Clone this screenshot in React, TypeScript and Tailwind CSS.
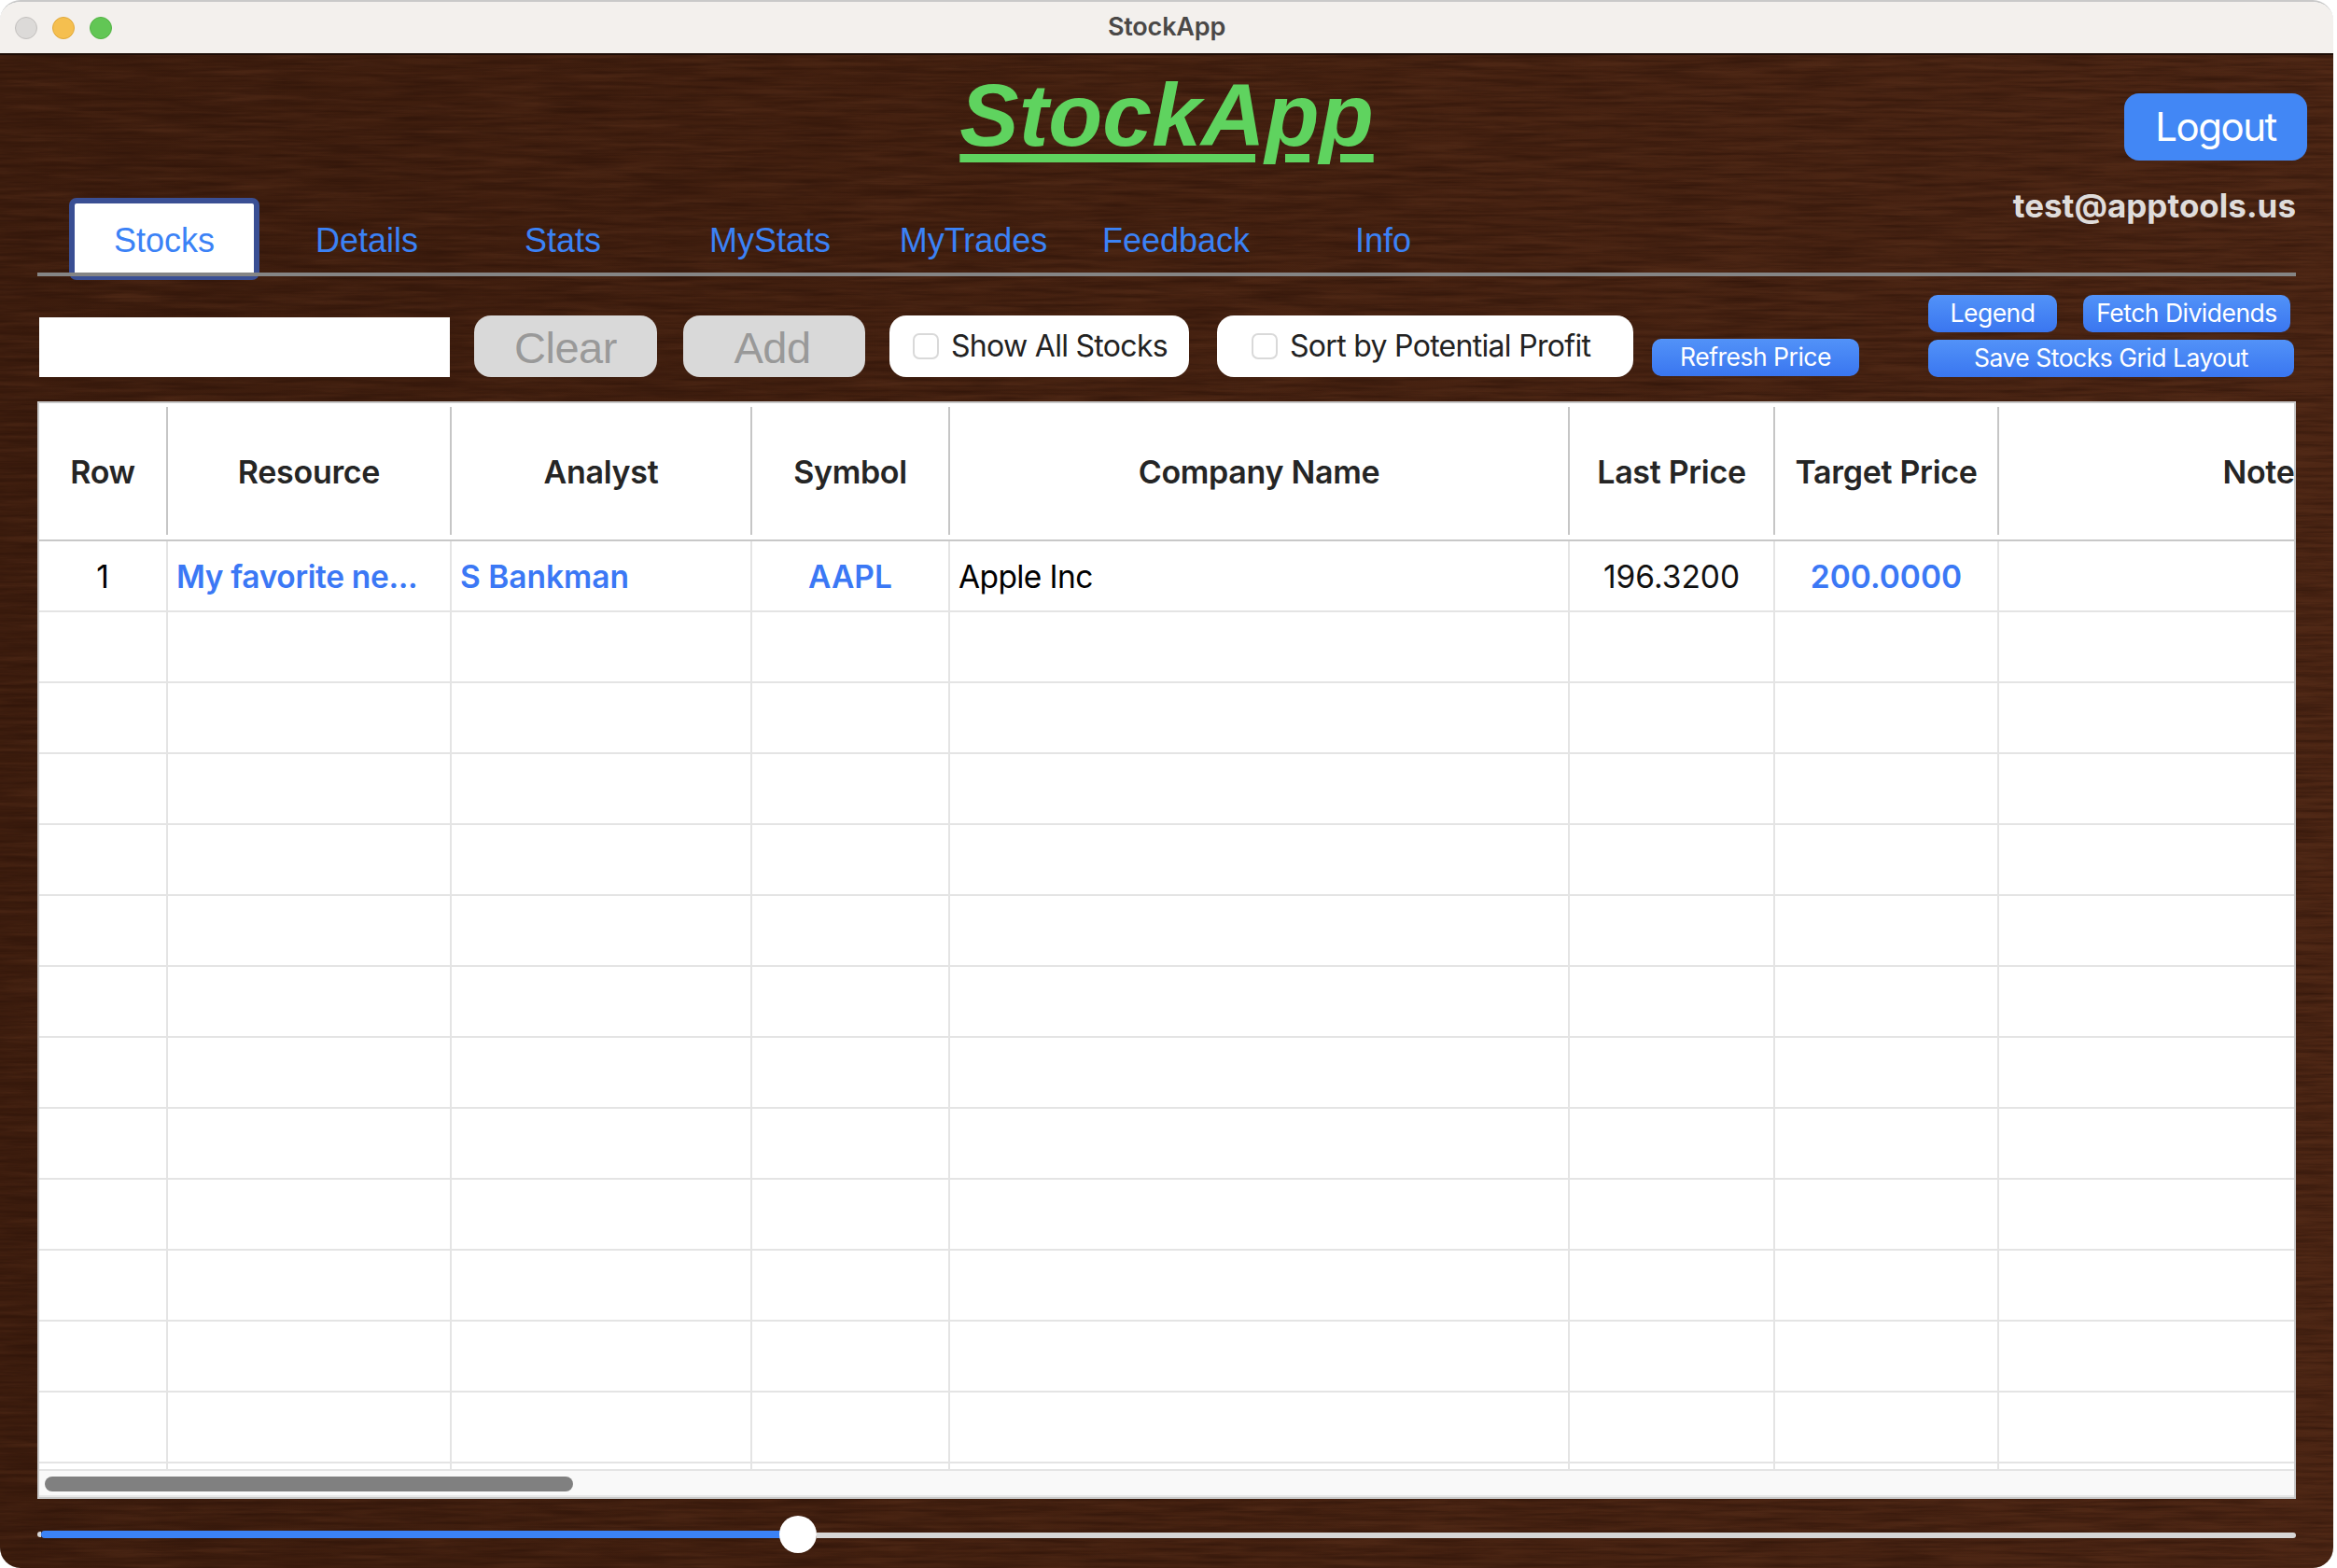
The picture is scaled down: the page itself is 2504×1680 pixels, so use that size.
const tabs = [
  { label: "Details", w: "w-[230px]" },
  { label: "Stats", w: "w-[190px]" },
  { label: "MyStats", w: "w-[254px]" },
  { label: "MyTrades", w: "w-[182px]" },
  { label: "Feedback", w: "w-[252px]" },
  { label: "Info", w: "w-[192px]" },
];

const columns = ["w-[138px]", "w-[304px]", "w-[322px]", "w-[212px]", "w-[664px]", "w-[220px]", "w-[240px]", "w-[556px]"];
const headers = ["Row", "Resource", "Analyst", "Symbol", "Company Name", "Last Price", "Target Price", "Note"];
const blue = "text-[#3b78f5] font-semibold";
const first = [
  { t: "1", c: "justify-center text-black" },
  { t: "My favorite ne...", c: `pl-[9px] tracking-[-0.35px] ${blue}` },
  { t: "S Bankman", c: `pl-[9px] ${blue}` },
  { t: "AAPL", c: `justify-center ${blue}` },
  { t: "Apple Inc", c: "pl-[9px] text-black tracking-[-0.6px]" },
  { t: "196.3200", c: "justify-center text-[#111]" },
  { t: "200.0000", c: `justify-center ${blue}` },
  { t: "", c: "" },
];

function Wood() {
  return (
    <svg className="absolute inset-0 h-full w-full" aria-hidden="true">
      <defs>
        <filter id="dark" x="0" y="0" width="100%" height="100%" colorInterpolationFilters="sRGB">
          <feTurbulence type="fractalNoise" baseFrequency="0.012 0.24" numOctaves="5" seed="8" />
          <feColorMatrix type="matrix" values="0 0 0 0 0.17  0 0 0 0 0.07  0 0 0 0 0.03  1.2 0 0 0 -0.42" />
        </filter>
        <filter id="light" x="0" y="0" width="100%" height="100%" colorInterpolationFilters="sRGB">
          <feTurbulence type="fractalNoise" baseFrequency="0.01 0.14" numOctaves="4" seed="21" />
          <feColorMatrix type="matrix" values="0 0 0 0 0.34  0 0 0 0 0.18  0 0 0 0 0.1  1.2 0 0 0 -0.5" />
        </filter>
        <linearGradient id="tone" x1="0" y1="0" x2="1" y2="0">
          <stop offset="0" stopColor="#3c1c0d" />
          <stop offset="0.5" stopColor="#452110" />
          <stop offset="0.8" stopColor="#482312" />
          <stop offset="1" stopColor="#4d2614" />
        </linearGradient>
      </defs>
      <rect width="100%" height="100%" fill="url(#tone)" />
      <rect width="100%" height="100%" filter="url(#light)" />
      <rect width="100%" height="100%" filter="url(#dark)" />
    </svg>
  );
}

function SmallButton({ children, className }: { children: string; className: string }) {
  return (
    <button className={`flex items-center justify-center rounded-[10px] bg-gradient-to-b from-[#5292f8] to-[#3a76f0] pb-[1px] text-[26.5px] tracking-[-0.5px] text-white ${className}`}>
      {children}
    </button>
  );
}

function Check({ label, className }: { label: string; className: string }) {
  return (
    <div className={`flex h-[66px] items-center rounded-[18px] bg-white text-[32px] tracking-[-0.7px] text-[#222] ${className}`}>
      <span className="h-[28px] w-[28px] shrink-0 rounded-[7px] border-2 border-[#d9d9d9] bg-white" />
      <span className="ml-[13px] whitespace-nowrap leading-none">{label}</span>
    </div>
  );
}

export default function App() {
  return (
    <div className="h-[1680px] w-[2504px] overflow-hidden bg-white font-['Inter',sans-serif]">
      <div className="flex h-[1680px] w-[2500px] flex-col overflow-hidden rounded-[22px] border-t-2 border-[#c9c9c9]">
        <div className="relative flex h-[57px] shrink-0 items-center justify-center border-b-2 border-[#1c0c06] bg-[#f3f0ed]">
          <div className="absolute left-[16px] flex gap-[16px]">
            <span className="h-[24px] w-[24px] rounded-full border border-[#c2bfbd] bg-[#dcdad8]" />
            <span className="h-[24px] w-[24px] rounded-full border border-[#e0a83a] bg-[#f5bf4f]" />
            <span className="h-[24px] w-[24px] rounded-full border border-[#52b344] bg-[#62c655]" />
          </div>
          <span className="text-[27px] font-semibold tracking-[-0.2px] text-[#4a4847]">StockApp</span>
        </div>

        <div className="relative flex flex-1 flex-col px-[40px]">
          <Wood />
          <div className="relative grid h-[141px] grid-cols-[1fr_auto_1fr]">
            <div />
            <h1 className="pt-[9px] font-['Liberation_Sans',sans-serif] text-[95px] leading-[110px] font-bold text-[#5fd35f] italic underline decoration-[9px] underline-offset-[9px]">
              StockApp
            </h1>
            <div className="flex items-start justify-end pt-[41px]">
              <button className="mr-[-12px] h-[72px] w-[196px] rounded-[16px] bg-[#4287f5] pb-[2px] text-[42px] tracking-[-1.5px] text-white">Logout</button>
            </div>
          </div>

          <div className="relative flex h-[96px] items-start justify-between">
            <div className="mt-[12px] -mb-1 flex items-center pl-[34px] font-['Liberation_Sans',sans-serif] text-[36px] text-[#3b82f6]">
              <div className="flex h-[88px] w-[204px] items-center justify-center rounded-[8px] border-[6px] border-[#3a4f94] bg-white pt-[4px]">Stocks</div>
              {tabs.map((tab) => (
                <div key={tab.label} className={`flex h-[88px] items-center justify-center pt-[4px] ${tab.w}`}>{tab.label}</div>
              ))}
            </div>
            <span className="font-['Inter',sans-serif] text-[35px] leading-[40px] font-bold text-[#dfdcdb]">test@apptools.us</span>
            <div className="absolute inset-x-0 bottom-0 h-[4px] bg-[#858585]" />
          </div>

          <div className="relative flex h-[134px] items-end pb-[26px]">
            <input aria-label="search" className="ml-[2px] h-[64px] w-[440px] bg-white" />
            <button className="ml-[26px] h-[66px] w-[196px] rounded-[18px] bg-[#d9d9d9] font-['Liberation_Sans',sans-serif] text-[47px] tracking-[-0.5px] text-[#999]">Clear</button>
            <button className="ml-[28px] h-[66px] w-[195px] rounded-[18px] bg-[#d9d9d9] pr-[4px] font-['Liberation_Sans',sans-serif] text-[47px] tracking-[-0.5px] text-[#999]">Add</button>
            <Check label="Show All Stocks" className="ml-[26px] w-[321px] pl-[25px]" />
            <Check label="Sort by Potential Profit" className="ml-[30px] w-[446px] pl-[37px]" />
            <SmallButton className="mb-[1px] ml-[20px] h-[40px] w-[222px]">Refresh Price</SmallButton>
            <div className="ml-[74px] flex w-[394px] flex-col gap-[8px]">
              <div className="flex gap-[28px]">
                <SmallButton className="h-[40px] w-[138px]">Legend</SmallButton>
                <SmallButton className="h-[40px] w-[222px]">Fetch Dividends</SmallButton>
              </div>
              <SmallButton className="h-[40px] w-[392px]">Save Stocks Grid Layout</SmallButton>
            </div>
          </div>

          <div className="relative flex w-[2420px] flex-col overflow-hidden border-2 border-[#c8c8c8] bg-white">
            <div className="flex h-[148px] shrink-0 border-b-2 border-[#c8c8c8] pt-[4px] pb-[5px]">
              {headers.map((h, i) => (
                <div key={h} className={`flex shrink-0 items-center justify-center border-r-2 border-[#c6c6c6] pt-[1px] text-[34px] font-semibold tracking-[-0.3px] text-[#252525] last:border-r-0 ${columns[i]}`}>
                  {h}
                </div>
              ))}
            </div>
            <div className="h-[996px] shrink-0 overflow-hidden border-b-2 border-[#e4e4e4]">
              {Array.from({ length: 14 }, (_, r) => (
                <div key={r} className="flex h-[76px] border-b-2 border-[#e4e4e4]">
                  {columns.map((w, i) => (
                    <div key={i} className={`flex shrink-0 items-center border-r-2 border-[#e4e4e4] pt-[3px] text-[33.5px] whitespace-nowrap last:border-r-0 ${w} ${r === 0 ? first[i].c : ""}`}>
                      {r === 0 ? first[i].t : ""}
                    </div>
                  ))}
                </div>
              ))}
            </div>
            <div className="h-[28px] shrink-0 border-b-2 border-[#e8e8e8] bg-[#f9f9f9] pt-[6px] pl-[6px]">
              <div className="h-[16px] w-[566px] rounded-full bg-[#808080]" />
            </div>
          </div>

          <div className="relative mt-[18px] flex h-[40px] w-[2420px] items-center">
            <div className="h-[6px] w-[4px] rounded-l-full bg-[#d6d6d6]" />
            <div className="h-[8px] w-[795px] rounded-l-full bg-[#3b82f6]" />
            <div className="z-10 -ml-[4px] h-[40px] w-[40px] shrink-0 rounded-full bg-white" />
            <div className="mt-[2px] h-[6px] flex-1 rounded-r-full bg-[#d6d6d6]" />
          </div>
        </div>
      </div>
    </div>
  );
}
